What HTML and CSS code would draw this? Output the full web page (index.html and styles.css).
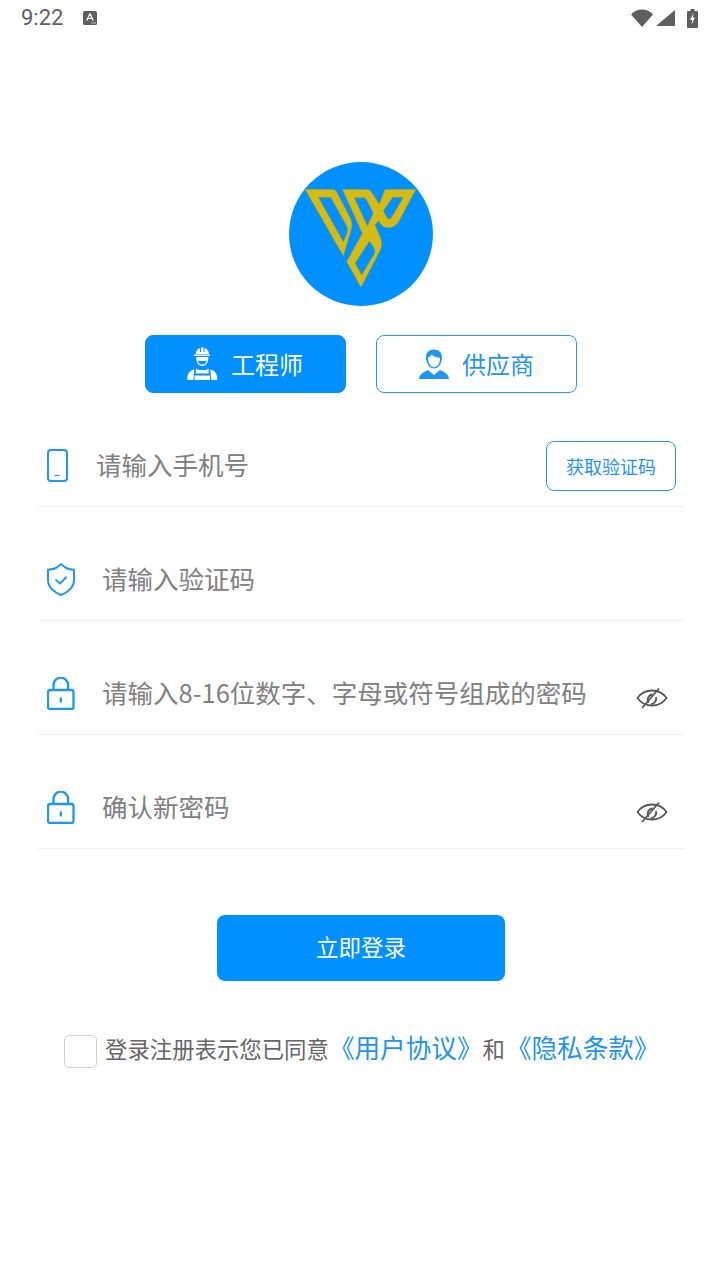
FILE: index.html
```html
<!DOCTYPE html>
<html lang="zh">
<head>
<meta charset="utf-8">
<title>登录</title>
<link rel="stylesheet" href="styles.css">
</head>
<body>
<header class="status">
  <span class="time">9:22</span>
  <svg class="st-a" viewBox="0 0 14 14"><rect width="14" height="14" rx="1.5" fill="#5f5f5f"/><path d="M3.200 9.500 6.200 2.500h1.600l3 7H9.400l-.6-1.500H5.200l-.6 1.500zM5.700 6.800h2.600L7 3.900z" fill="#fff"/><path d="M8.500 11.500h1v1h-1zM10.300 11.500h1v1h-1zM12 11.500h.8v1H12z" fill="#fff"/></svg>
  <span class="st-gap"></span>
  <svg class="st-wifi" viewBox="0 0 22 18"><path d="M0 5.500C3 2.200 6.800.5 11 .5s8 1.700 11 5L11 18z" fill="#5f5f5f"/></svg>
  <svg class="st-signal" viewBox="0 0 19 16"><path d="M19 0v16H0z" fill="#5f5f5f"/></svg>
  <svg class="st-batt" viewBox="0 0 11 19"><path d="M3.500 0h4v2H10a1 1 0 0 1 1 1v15a1 1 0 0 1-1 1H1a1 1 0 0 1-1-1V3a1 1 0 0 1 1-1h2.500z" fill="#5f5f5f"/><path d="M6.500 4 3 11h2.300l-.8 5L8 8.500H5.800z" fill="#fff"/></svg>
</header>

<main class="page">
  <svg class="logo" viewBox="-33 -54 432 432">
    <circle cx="183" cy="162" r="216" fill="#0090ff"/>
    <g fill="#d4bc14" stroke="#8a9a50" stroke-width="2" fill-rule="evenodd">
      <path d="M15 28H98Q105 28 110 36L150 112Q160 132 153 152L130 228ZM55 52 130 185 141 160Q145 148 139 136L92 52Z"/>
      <path d="M127 28H198Q210 28 217 40L238 72 255 28H348L296 125Q285 143 264 143 246 143 236 122L225 134 240 170Q250 192 240 212L183 322 140 245 187 160ZM163 53H190Q196 53 200 60L220 100 202 138ZM310 52H278L250 92 262 115Q268 120 274 113ZM208 184 165 250 185 285 224 220Q228 206 208 184Z"/>
    </g>
  </svg>

  <div class="roles">
    <button class="role role-on">
      <svg class="role-icon" viewBox="0 0 32 34" fill="#fff"><path d="M9.700 7C9.700 3.500 12 1.500 14 1V5h1V.6h2.500V5h1V1c2.200.5 4.500 2.500 4.500 6z"/><path d="M8 7.500h16v1.400H8z"/><path d="M10.300 10h12c.3 5-2 9-6 9s-6.300-4-6-9zm1.700 3.500c0 2.500 1.700 4 4.300 4s4.300-1.500 4.300-4c-2.500.8-6 .8-8.600 0z" fill-rule="evenodd"/><path d="M1.300 33c0-5 1-8 5-10l2-.6-1 10.600zM31.300 33c0-5-1-8-5-10l-2-.6 1 10.600zM10 21.500l2.500 1.500h7.500l2.500-1.500 .3 5H9.700zM8.500 28.500h15.500V33H8.500z"/></svg>
      <span>工程师</span>
    </button>
    <button class="role">
      <svg class="role-icon" viewBox="0 0 32 34" fill="#1f97f2"><path fill-rule="evenodd" d="M17 2.500c5 0 8 3 8 8 0 2-.5 3-1 5-1 3-3.500 6-7 6s-6-3-7-6c-.5-2-1-3-1-5 0-5 3-8 8-8zM11 10.500c2-.5 3-2 3.500-3 1.500 2 5 3 8.500 3.300.3 5-2.500 9.500-6 9.500s-6-4.800-6-9.800z"/><path d="M2 32c.5-4 2.500-6 8-8.500l1-.5 6 5 6-5 1 .5c5.500 2.500 7.500 4.500 8 8.500z"/></svg>
      <span>供应商</span>
    </button>
  </div>

  <form class="form">
    <div class="row">
      <svg class="ic ic-phone" viewBox="0 0 21 33" fill="none" stroke="#1f97f2" stroke-width="2"><rect x="1" y="1" width="19" height="31" rx="3"/><path d="M7.500 26.500h5" stroke-width="1.300"/></svg>
      <span class="ph">请输入手机号</span>
      <span class="code-btn">获取验证码</span>
    </div>
    <div class="row">
      <svg class="ic ic-wide" viewBox="0 0 28 33" fill="none" stroke="#1f97f2" stroke-width="2"><path d="M14 1.300 19 5c2 1 5 1.500 8 1.700V17c0 7-6 12.500-13 15C7 29.500 1 24 1 17V6.700C4 6.500 7 6 9 5z"/><path d="M8.500 16.500 13 20.500 19.500 14"/></svg>
      <span class="ph">请输入验证码</span>
    </div>
    <div class="row">
      <svg class="ic ic-wide" viewBox="0 0 28 33" fill="none" stroke="#1f97f2" stroke-width="2.300"><rect x="1" y="13" width="25.500" height="19" rx="2"/><path d="M6.500 13V8a7.300 7.300 0 0 1 14.600 0v5"/><path d="M13.800 20.500v5"/></svg>
      <span class="ph">请输入8-16位数字、字母或符号组成的密码</span>
      <svg class="eye" viewBox="0 0 32 22" fill="none" stroke="#555" stroke-width="1.800"><path d="M1.500 11C5 6 10 3.500 16 3.500S27 6 30.500 11C27 16 22 18.500 16 18.500S5 16 1.500 11z"/><path d="M23 1.500 6 21"/><path d="M16.500 7.500a5.500 5.500 0 0 0-4 8.500M20 10a5.500 5.500 0 0 1-5 7"/></svg>
    </div>
    <div class="row">
      <svg class="ic ic-wide" viewBox="0 0 28 33" fill="none" stroke="#1f97f2" stroke-width="2.300"><rect x="1" y="13" width="25.500" height="19" rx="2"/><path d="M6.500 13V8a7.300 7.300 0 0 1 14.600 0v5"/><path d="M13.800 20.500v5"/></svg>
      <span class="ph">确认新密码</span>
      <svg class="eye" viewBox="0 0 32 22" fill="none" stroke="#555" stroke-width="1.800"><path d="M1.500 11C5 6 10 3.500 16 3.500S27 6 30.500 11C27 16 22 18.500 16 18.500S5 16 1.500 11z"/><path d="M23 1.500 6 21"/><path d="M16.500 7.500a5.500 5.500 0 0 0-4 8.500M20 10a5.500 5.500 0 0 1-5 7"/></svg>
    </div>
  </form>

  <button class="login">立即登录</button>

  <div class="agree">
    <span class="check"></span>
    <p class="agree-text">登录注册表示您已同意<a class="link">《用户协议》</a><span class="and">和</span><a class="link">《隐私条款》</a></p>
  </div>
</main>
</body>
</html>
```

FILE: styles.css
```css
* { box-sizing: border-box; }
html, body { margin: 0; padding: 0; }
body {
  width: 720px;
  height: 1280px;
  background: #fff;
  font-family: "Noto Sans CJK SC", "Noto Sans", sans-serif;
  overflow: hidden;
}
.status {
  display: flex;
  align-items: center;
  height: 36px;
  padding: 0 22px 0 21px;
  color: #5f5f5f;
}
.time { font: 400 22px/36px Roboto, sans-serif; width: 62px; }
.st-a { width: 14px; height: 14px; }
.st-gap { flex: 1; }
.st-wifi { width: 22px; height: 18px; margin-right: 3px; }
.st-signal { width: 19px; height: 16px; margin-right: 12px; }
.st-batt { width: 11px; height: 19px; }

.page {
  display: flex;
  flex-direction: column;
  align-items: center;
  padding-left: 2px;
}
.logo { width: 144px; height: 144px; margin-top: 126px; display: block; }
.roles { display: flex; gap: 30px; margin-top: 29px; }
.role {
  display: flex;
  align-items: center;
  justify-content: center;
  gap: 13px;
  width: 201px;
  height: 58px;
  border: 1px solid #2a96e8;
  border-radius: 8px;
  background: #fff;
  color: #1f93ee;
  font: 400 24px/1 "Noto Sans CJK SC", sans-serif;
  padding: 0 2px 0 0;
}
.role-on { background: #0090ff; border-color: #0090ff; color: #fff; }
.role-icon { width: 32px; height: 34px; }
.form { align-self: stretch; margin: 0 36px 0 36px; }
.row {
  display: flex;
  align-items: center;
  height: 114px;
  padding: 32px 8px 0 9px;
  border-bottom: 1px solid #eeeeee;
}
.ic { display: block; flex: none; height: 33px; }
.ic-phone { width: 21px; margin-right: 28px; }
.ic-wide { width: 28px; margin-right: 27px; }
.ph { color: #808080; font-size: 25.500px; line-height: 40px; flex: 1; white-space: nowrap; margin-top: -4px; }
.code-btn {
  flex: none;
  width: 130px;
  height: 50px;
  border: 1px solid #2a96e8;
  border-radius: 8px;
  color: #1f93ee;
  font-size: 18px;
  line-height: 49px;
  text-align: center;
}
.eye { width: 32px; height: 22px; margin: 8px 8px 0 0; flex: none; }
.login {
  width: 288px;
  height: 66px;
  margin-top: 66px;
  border: 0;
  border-radius: 8px;
  background: #0090ff;
  color: #fff;
  font: 400 22.500px/1 "Noto Sans CJK SC", sans-serif;
  padding: 0 0 4px;
}
.agree {
  display: flex;
  align-self: flex-start;
  align-items: flex-start;
  margin: 54px 0 0 62px;
}
.check {
  flex: none;
  width: 33px;
  height: 33px;
  border: 1px solid #cfcfcf;
  border-radius: 5px;
  margin-right: 8px;
}
.agree-text {
  margin: -8px 0 0 0;
  color: #666;
  font-size: 22.400px;
  line-height: 40px;
  white-space: nowrap;
}
.link { color: #1f93ee; font-size: 25.600px; }
.and { margin: 0 1px 0 0; }
```
